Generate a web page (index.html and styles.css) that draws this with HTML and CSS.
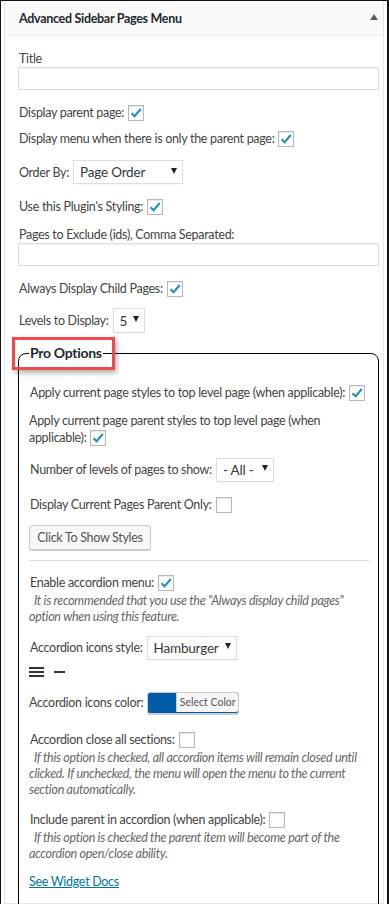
FILE: index.html
```html
<!DOCTYPE html>
<html lang="en">

<head>
    <meta charset="UTF-8">
    <meta name="viewport" content="width=device-width, initial-scale=1.0">
    <title>Advanced Sidebar Pages Menu</title>
    <link rel="stylesheet" href="styles.css">
</head>

<body>

    <div class="frame">
        <div class="widget">

            <div class="widget-top">
                <h3 class="widget-title">Advanced Sidebar Pages Menu</h3>
                <span class="toggle-arrow"></span>
            </div>

            <div class="widget-content">
                <p class="field-label first-label">Title</p>
                <div class="text-input"></div>

                <p class="row row-parent">Display parent page:<span class="checkbox"><svg viewBox="0 0 14 14"><path d="M2.5 7.2 L5.6 10.2 L11.8 3"/></svg></span></p>

                <p class="row row-tight">Display menu when there is only the parent page:<span class="checkbox"><svg viewBox="0 0 14 14"><path d="M2.5 7.2 L5.6 10.2 L11.8 3"/></svg></span></p>

                <div class="select-row row-select">
                    <span>Order By:</span>
                    <div class="select select-order">Page Order</div>
                </div>

                <p class="row row-after-select">Use this Plugin's Styling:<span class="checkbox"><svg viewBox="0 0 14 14"><path d="M2.5 7.2 L5.6 10.2 L11.8 3"/></svg></span></p>

                <p class="field-label exclude-label">Pages to Exclude (ids), Comma Separated:</p>
                <div class="text-input"></div>

                <p class="row row-always">Always Display Child Pages:<span class="checkbox"><svg viewBox="0 0 14 14"><path d="M2.5 7.2 L5.6 10.2 L11.8 3"/></svg></span></p>

                <div class="select-row row-levels">
                    <span>Levels to Display:</span>
                    <div class="select select-levels">5</div>
                </div>

                <fieldset class="pro-options">
                    <legend>Pro Options</legend>

                    <p class="row row-first">Apply current page styles to top level page (when applicable):<span class="checkbox"><svg viewBox="0 0 14 14"><path d="M2.5 7.2 L5.6 10.2 L11.8 3"/></svg></span></p>

                    <p class="row-wrap">Apply current page parent styles to top level page (when applicable):<span class="checkbox"><svg viewBox="0 0 14 14"><path d="M2.5 7.2 L5.6 10.2 L11.8 3"/></svg></span></p>

                    <div class="select-row row-select">
                        <span>Number of levels of pages to show:</span>
                        <div class="select select-number">- All -</div>
                    </div>

                    <p class="row row-current">Display Current Pages Parent Only:<span class="checkbox"></span></p>

                    <button class="btn">Click To Show Styles</button>

                    <hr class="divider">

                    <p class="row row-accordion">Enable accordion menu:<span class="checkbox"><svg viewBox="0 0 14 14"><path d="M2.5 7.2 L5.6 10.2 L11.8 3"/></svg></span></p>
                    <p class="description">It is recommended that you use the "Always display child pages" option when using this feature.</p>

                    <div class="select-row row-icons-style">
                        <span>Accordion icons style:</span>
                        <div class="select select-icons">Hamburger</div>
                    </div>

                    <div class="icons-preview">
                        <svg class="icon-hamburger" width="15" height="12" viewBox="0 0 15 12"><path d="M0 2h15M0 6h15M0 10h15"/></svg>
                        <svg class="icon-minus" width="11" height="12" viewBox="0 0 11 12"><path d="M0 6h11"/></svg>
                    </div>

                    <div class="color-row">
                        <span>Accordion icons color:</span>
                        <div class="color-result"><span class="color-label">Select Color</span></div>
                    </div>

                    <p class="row row-close">Accordion close all sections:<span class="checkbox"></span></p>
                    <p class="description">If this option is checked, all accordion items will remain closed until clicked. If unchecked, the menu will open the menu to the current section automatically.</p>

                    <p class="row row-include">Include parent in accordion (when applicable):<span class="checkbox"></span></p>
                    <p class="description">If this option is checked the parent item will become part of the accordion open/close ability.</p>

                    <p class="docs"><a href="#">See Widget Docs</a></p>
                </fieldset>
            </div>

        </div>
    </div>

</body>

</html>
```

FILE: styles.css
```css
* {
    box-sizing: border-box;
}

body {
    margin: 0;
    font-family: Lato, 'Open Sans', sans-serif;
    font-size: 12.5px;
    letter-spacing: -0.3px;
    color: #444;
    background-color: #fff;
    overflow: hidden;
}

p {
    margin: 0;
}

.frame {
    height: 904px;
    border-top: 1px solid #111;
    border-left: 1px solid #111;
    border-right: 2px solid #111;
    padding: 0 3px;
    overflow: hidden;
}

.widget {
    height: 100%;
    border: 1px solid #e5e5e5;
    border-top: 0;
    background-color: #fff;
}

.widget-top {
    height: 35px;
    background-color: #fafafa;
    border-bottom: 1px solid #eee;
    display: flex;
    align-items: center;
    justify-content: space-between;
    padding: 0 5px 0 14px;
}

.widget-title {
    margin: 0;
    font-size: 12.5px;
    font-weight: 700;
    letter-spacing: -0.3px;
    color: #23282d;
}

.toggle-arrow {
    width: 0;
    height: 0;
    border-style: solid;
    border-width: 0 4px 6px 4px;
    border-color: transparent transparent #555d66 transparent;
    margin-top: -2px;
}

.widget-content {
    padding: 0 4px 0 13px;
}

.field-label {
    line-height: 17px;
    padding-left: 1px;
}

.first-label {
    margin-top: 14px;
}

.exclude-label {
    margin-top: 9px;
}

.text-input {
    height: 23px;
    border: 1px solid #ddd;
    box-shadow: inset 0 1px 2px rgba(0, 0, 0, 0.07);
    background-color: #fff;
}

.row {
    line-height: 20px;
    padding-left: 1px;
}

.row-parent {
    margin-top: 13px;
}

.row-tight {
    margin-top: 6px;
}

.row-after-select {
    margin-top: 13px;
}

.row-always {
    margin-top: 13px;
}

.checkbox {
    display: inline-block;
    width: 16px;
    height: 16px;
    margin-left: 4px;
    border: 1px solid #b4b9be;
    background-color: #fff;
    box-shadow: inset 0 1px 2px rgba(0, 0, 0, 0.1);
    vertical-align: middle;
    position: relative;
    top: -1px;
}

.checkbox svg {
    display: block;
    width: 14px;
    height: 14px;
    fill: none;
    stroke: #1e8cbe;
    stroke-width: 2;
}

.select-row {
    display: flex;
    align-items: center;
    gap: 4px;
    padding-left: 1px;
}

.row-select {
    margin-top: 11px;
}

.row-levels {
    margin-top: 9px;
}

.select {
    height: 24px;
    border: 1px solid #ddd;
    background-color: #fff;
    box-shadow: 0 1px 2px rgba(0, 0, 0, 0.04);
    font-size: 13.5px;
    letter-spacing: -0.2px;
    color: #32373c;
    display: flex;
    align-items: center;
    justify-content: space-between;
    padding: 0 5px 0 6px;
}

.select::after {
    content: "";
    width: 0;
    height: 0;
    border-style: solid;
    border-width: 6px 3.5px 0 3.5px;
    border-color: #222 transparent transparent transparent;
    margin-top: -3px;
}

.select-order {
    width: 110px;
}

.select-levels {
    width: 32px;
    height: 25px;
}

.select-number {
    width: 58px;
}

.select-icons {
    width: 90px;
}

.pro-options {
    margin: 10px 0 0;
    border: 1px solid #000;
    border-radius: 8px 8px 0 0;
    padding: 0 9px 0 10px;
    min-height: 600px;
}

.pro-options legend {
    position: relative;
    padding: 0 1px;
    font-size: 14px;
    font-weight: 700;
    line-height: 20px;
    color: #23282d;
}

/* red highlight drawn round the legend */
.pro-options legend::after {
    content: "";
    position: absolute;
    left: -17px;
    top: -6px;
    width: 97px;
    height: 27px;
    border: 3px solid #ef4a4c;
    box-shadow: 2px 3px 5px rgba(0, 0, 0, 0.3);
}

.row-first {
    margin-top: 20px;
}

.row-wrap {
    margin-top: 9px;
    line-height: 17px;
}

.row-current {
    margin-top: 13px;
}

.btn {
    display: block;
    margin-top: 10px;
    height: 25px;
    width: 122px;
    padding: 0;
    font-family: inherit;
    font-size: 12.5px;
    letter-spacing: -0.3px;
    color: #555;
    background-color: #f7f7f7;
    border: 1px solid #ccc;
    border-radius: 3px;
    box-shadow: 0 1px 0 #ccc;
    cursor: pointer;
}

.divider {
    margin: 10px 0 0;
    border: 0;
    border-top: 1px solid #ddd;
}

.row-accordion {
    margin-top: 12px;
}

.description {
    line-height: 16px;
    font-style: italic;
    color: #666;
    text-indent: 5px;
}

.row-icons-style {
    margin-top: 11px;
}

.icons-preview {
    margin-top: 6px;
    display: flex;
    gap: 10px;
    height: 12px;
}

.icons-preview svg {
    stroke: #333;
    stroke-width: 2;
    fill: none;
}

.color-row {
    margin-top: 14px;
    display: flex;
    align-items: center;
    gap: 4px;
}

.color-result {
    height: 22px;
    width: 92px;
    padding-left: 28px;
    border: 1px solid #ccc;
    border-radius: 3px;
    background-color: #005ca8;
    box-shadow: 0 1px 0 #ccc;
    display: flex;
}

.color-label {
    flex: 1;
    margin-bottom: 1px;
    background-color: #f7f7f7;
    border-left: 1px solid #ccc;
    border-radius: 0 2px 2px 0;
    font-size: 10.5px;
    letter-spacing: 0;
    color: #555;
    display: flex;
    align-items: center;
    justify-content: center;
}

.row-close {
    margin-top: 16px;
}

.row-include {
    margin-top: 12px;
}

.docs {
    margin-top: 11px;
    line-height: 17px;
}

.docs a {
    color: #0073aa;
    text-decoration: underline;
}
```
